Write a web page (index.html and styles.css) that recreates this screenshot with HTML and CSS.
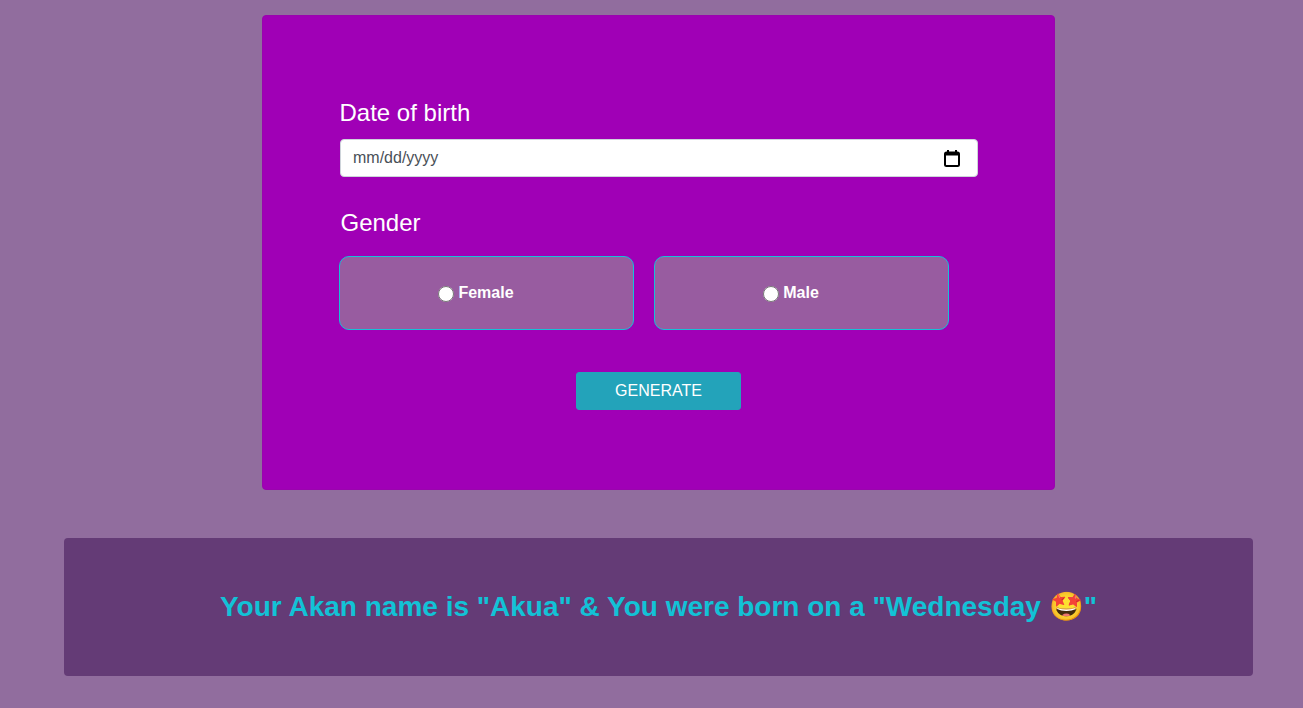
FILE: index.html
```html
<!DOCTYPE html>
<html lang="en">
<head>
    <meta charset="UTF-8">
    <meta name="viewport" content="width=device-width, initial-scale=1.0">
    <title>Akan Name</title>

    <link rel="stylesheet" href="styles.css">
</head>
<body>

    <div class="card">
        <form class="akan-form">
            <label class="field-label" for="birth">Date of birth</label>
            <input class="date-input" id="birth" type="date">

            <div class="field-label gender-label">Gender</div>
            <div class="gender-row">
                <label class="gender-box">
                    <input type="radio" name="gender">
                    <span>Female</span>
                </label>
                <label class="gender-box">
                    <input type="radio" name="gender">
                    <span>Male</span>
                </label>
            </div>

            <div class="actions">
                <button class="generate" type="button">GENERATE</button>
            </div>
        </form>
    </div>

    <div class="result">
        <h2>Your Akan name is "Akua" &amp; You were born on a "Wednesday 🤩"</h2>
    </div>

</body>
</html>
```

FILE: styles.css
```css
* {
    box-sizing: border-box;
}

body {
    margin: 0;
    height: 708px;
    overflow: hidden;
    padding-top: 15px;
    background: #916d9e;
    font-family: "Liberation Sans", Arial, sans-serif;
    color: white;
}

.card {
    width: 793px;
    height: 475px;
    margin-left: 262px;
    padding: 82px 76px 0 77px;
    background: #a000b6;
    border: 1px solid #9a04ae;
    border-radius: 4px;
}

.field-label {
    display: block;
    margin-left: -.5px;
    font-size: 24px;
    line-height: 29px;
}

.date-input {
    display: block;
    width: 638px;
    height: 38px;
    margin-top: 12px;
    padding: 6px 12px;
    font-family: inherit;
    font-size: 16px;
    color: #495057;
    background: white;
    border: 1px solid #ced4da;
    border-radius: 4px;
}

.date-input::-webkit-datetime-edit-text {
    padding: 0;
}

.date-input::-webkit-datetime-edit-month-field,
.date-input::-webkit-datetime-edit-day-field,
.date-input::-webkit-datetime-edit-year-field {
    padding: 0;
}

/* outlined calendar, the stock one is filled */
.date-input::-webkit-calendar-picker-indicator {
    width: 16px;
    height: 18px;
    margin-right: 5px;
    padding: 0;
    background: url("data:image/svg+xml,%3Csvg xmlns='http://www.w3.org/2000/svg' width='16' height='18' viewBox='0 0 16 18'%3E%3Crect x='1' y='3.5' width='14' height='13.5' rx='1.5' fill='none' stroke='%23000' stroke-width='2'/%3E%3Cpath d='M1 4h14v2.5H1z'/%3E%3Cpath d='M4 1v3M12 1v3' stroke='%23000' stroke-width='2'/%3E%3C/svg%3E") center no-repeat;
}

.gender-label {
    margin-top: 31px;
    padding-left: 1px;
}

.gender-row {
    display: flex;
    gap: 20px;
    margin: 19px 0 0 -1px;
}

.gender-box {
    display: flex;
    align-items: center;
    justify-content: center;
    gap: 4px;
    width: 295px;
    height: 74px;
    padding-right: 21px;
    font-size: 16px;
    font-weight: bold;
    background: #985ca0;
    border: 1px solid #17c0d8;
    border-radius: 10px;
}

.gender-box input {
    width: 16px;
    height: 16px;
    margin: 2px 0 0;
}

.actions {
    display: flex;
    justify-content: center;
    width: 636px;
    margin-top: 42px;
}

.generate {
    width: 165px;
    height: 38px;
    padding-left: 7px;
    font-family: inherit;
    font-size: 16px;
    color: white;
    background: #23a3ba;
    border: 1px solid #23a3ba;
    border-radius: 3px;
}

.result {
    display: flex;
    align-items: center;
    justify-content: center;
    width: 1189px;
    height: 138px;
    margin: 48px 0 0 64px;
    padding-bottom: 2px;
    background: #643b76;
    border-radius: 4px;
}

.result h2 {
    margin: 0;
    font-size: 28px;
    font-weight: bold;
    color: #12c2d6;
}
```
